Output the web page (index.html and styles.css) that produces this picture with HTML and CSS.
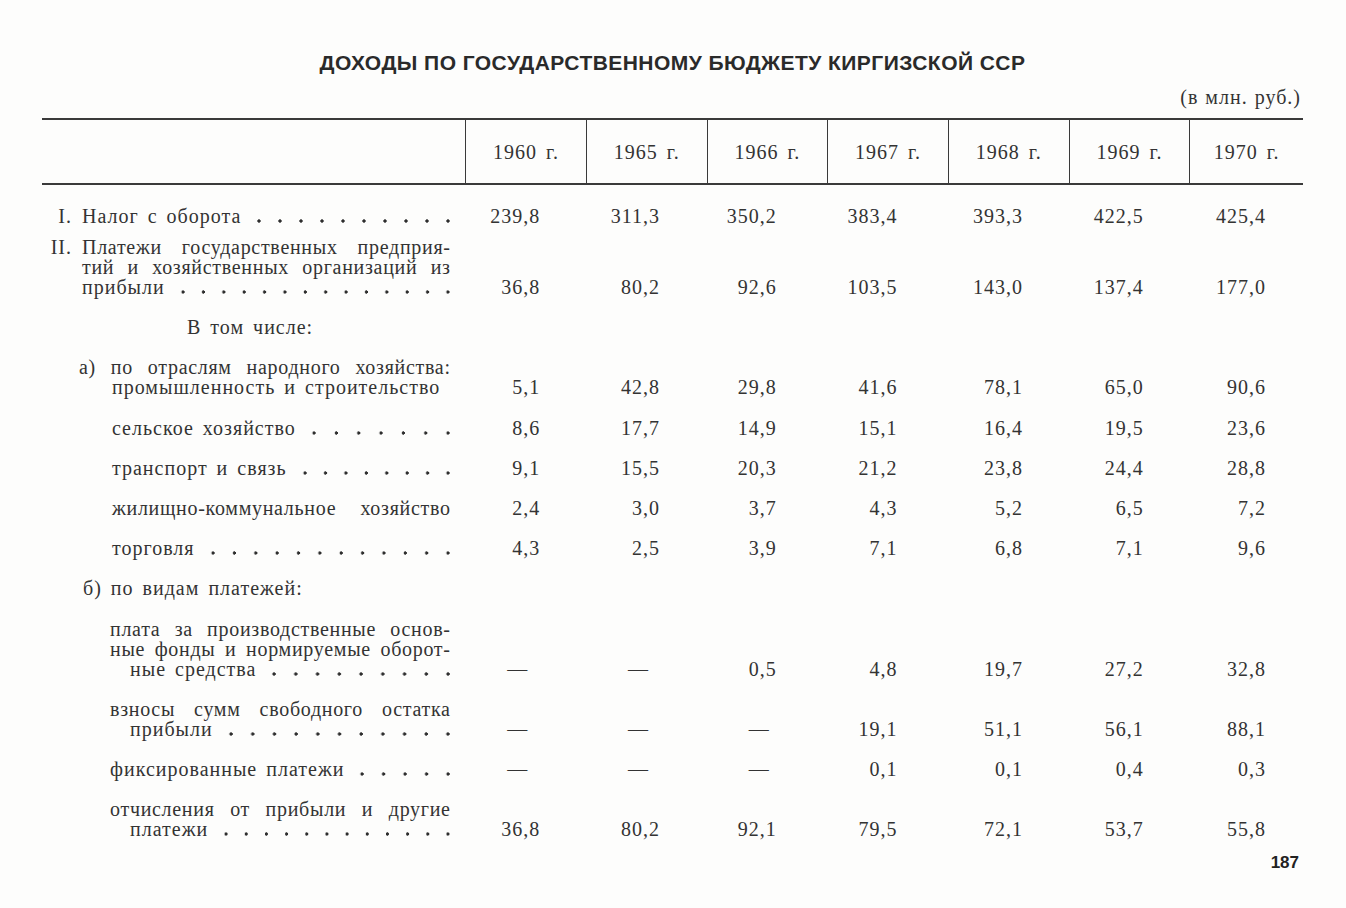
FILE: index.html
```html
<!DOCTYPE html>
<html lang="ru">
<head>
<meta charset="utf-8">
<title>Доходы по государственному бюджету Киргизской ССР</title>
<link rel="stylesheet" href="styles.css">
</head>
<body>
<div class="page">
  <h1 class="title">ДОХОДЫ ПО ГОСУДАРСТВЕННОМУ БЮДЖЕТУ КИРГИЗСКОЙ ССР</h1>
  <div class="units">(в млн. руб.)</div>
  <table class="budget">
    <colgroup>
      <col class="c-stub"><col class="c-y"><col class="c-y"><col class="c-y"><col class="c-y"><col class="c-y"><col class="c-y"><col class="c-last">
    </colgroup>
    <thead>
      <tr>
        <th class="stub"></th>
        <th>1960 г.</th><th>1965 г.</th><th>1966 г.</th><th>1967 г.</th><th>1968 г.</th><th>1969 г.</th><th>1970 г.</th>
      </tr>
    </thead>
    <tbody>
      <tr class="first">
        <td class="label"><div class="numbered"><span class="roman">I.</span><div class="body"><div class="line"><span>Налог с оборота</span><span class="lead"></span></div></div></div></td>
        <td class="num">239,8</td><td class="num">311,3</td><td class="num">350,2</td><td class="num">383,4</td><td class="num">393,3</td><td class="num">422,5</td><td class="num">425,4</td>
      </tr>
      <tr class="second">
        <td class="label"><div class="numbered"><span class="roman">II.</span><div class="body">
          <div class="line j">Платежи государственных предприя-</div>
          <div class="line j">тий и хозяйственных организаций из</div>
          <div class="line"><span>прибыли</span><span class="lead"></span></div>
        </div></div></td>
        <td class="num">36,8</td><td class="num">80,2</td><td class="num">92,6</td><td class="num">103,5</td><td class="num">143,0</td><td class="num">137,4</td><td class="num">177,0</td>
      </tr>
      <tr>
        <td class="label incl" colspan="8"><div class="line">В том числе:</div></td>
      </tr>
      <tr>
        <td class="label sub-a">
          <div class="line j">а) по отраслям народного хозяйства:</div>
          <div class="line ind-a">промышленность и строительство</div>
        </td>
        <td class="num">5,1</td><td class="num">42,8</td><td class="num">29,8</td><td class="num">41,6</td><td class="num">78,1</td><td class="num">65,0</td><td class="num">90,6</td>
      </tr>
      <tr>
        <td class="label item-a"><div class="line"><span>сельское хозяйство</span><span class="lead"></span></div></td>
        <td class="num">8,6</td><td class="num">17,7</td><td class="num">14,9</td><td class="num">15,1</td><td class="num">16,4</td><td class="num">19,5</td><td class="num">23,6</td>
      </tr>
      <tr>
        <td class="label item-a"><div class="line"><span>транспорт и связь</span><span class="lead"></span></div></td>
        <td class="num">9,1</td><td class="num">15,5</td><td class="num">20,3</td><td class="num">21,2</td><td class="num">23,8</td><td class="num">24,4</td><td class="num">28,8</td>
      </tr>
      <tr>
        <td class="label item-a"><div class="line j">жилищно-коммунальное хозяйство</div></td>
        <td class="num">2,4</td><td class="num">3,0</td><td class="num">3,7</td><td class="num">4,3</td><td class="num">5,2</td><td class="num">6,5</td><td class="num">7,2</td>
      </tr>
      <tr>
        <td class="label item-a"><div class="line"><span>торговля</span><span class="lead"></span></div></td>
        <td class="num">4,3</td><td class="num">2,5</td><td class="num">3,9</td><td class="num">7,1</td><td class="num">6,8</td><td class="num">7,1</td><td class="num">9,6</td>
      </tr>
      <tr>
        <td class="label sub-b" colspan="8"><div class="line">б) по видам платежей:</div></td>
      </tr>
      <tr>
        <td class="label item-b">
          <div class="line j">плата за производственные основ-</div>
          <div class="line j">ные фонды и нормируемые оборот-</div>
          <div class="line hang"><span>ные средства</span><span class="lead"></span></div>
        </td>
        <td class="num dash">—</td><td class="num dash">—</td><td class="num">0,5</td><td class="num">4,8</td><td class="num">19,7</td><td class="num">27,2</td><td class="num">32,8</td>
      </tr>
      <tr>
        <td class="label item-b">
          <div class="line j">взносы сумм свободного остатка</div>
          <div class="line hang"><span>прибыли</span><span class="lead"></span></div>
        </td>
        <td class="num dash">—</td><td class="num dash">—</td><td class="num dash">—</td><td class="num">19,1</td><td class="num">51,1</td><td class="num">56,1</td><td class="num">88,1</td>
      </tr>
      <tr>
        <td class="label item-b"><div class="line"><span>фиксированные платежи</span><span class="lead"></span></div></td>
        <td class="num dash">—</td><td class="num dash">—</td><td class="num dash">—</td><td class="num">0,1</td><td class="num">0,1</td><td class="num">0,4</td><td class="num">0,3</td>
      </tr>
      <tr>
        <td class="label item-b">
          <div class="line j">отчисления от прибыли и другие</div>
          <div class="line hang"><span>платежи</span><span class="lead"></span></div>
        </td>
        <td class="num">36,8</td><td class="num">80,2</td><td class="num">92,1</td><td class="num">79,5</td><td class="num">72,1</td><td class="num">53,7</td><td class="num">55,8</td>
      </tr>
    </tbody>
  </table>
  <div class="folio">187</div>
</div>
</body>
</html>
```

FILE: styles.css
```css
html, body {
  margin: 0;
  padding: 0;
  background: #fdfdfc;
}

.page {
  width: 1346px;
  height: 908px;
  box-sizing: border-box;
  padding: 50px 43px 0 42px;
  font-family: "Liberation Serif", "DejaVu Serif", serif;
  font-size: 20px;
  letter-spacing: 1px;
  word-spacing: 3px;
  color: #333;
}

.title {
  margin: 0;
  text-align: center;
  font-family: "Liberation Sans", "DejaVu Sans", sans-serif;
  font-weight: bold;
  font-size: 21px;
  line-height: 26px;
  letter-spacing: 0.45px;
  word-spacing: 0;
  color: #2a2a2a;
}

.units {
  margin-top: 11px;
  text-align: right;
  line-height: 20px;
  padding-right: 2px;
  word-spacing: 1px;
}

.budget {
  margin-top: 11px;
  width: 1261px;
  table-layout: fixed;
  border-collapse: collapse;
  border-top: 2px solid #3a3a3a;
}

.c-stub { width: 423px; }
.c-y { width: 120.5px; }
.c-last { width: 113px; }

.budget thead tr {
  border-bottom: 2px solid #3a3a3a;
}

.budget th {
  height: 63px;
  padding: 0;
  font-weight: normal;
  text-align: center;
  vertical-align: middle;
  line-height: 20px;
  border-left: 1.5px solid #3a3a3a;
}

.budget th.stub {
  border-left: none;
}

.budget td {
  padding: 20.2px 0 0 0;
  line-height: 20px;
  vertical-align: bottom;
}

.budget tr.first td {
  padding-top: 21px;
}

.budget tr.second td {
  padding-top: 11px;
}

.label {
  padding-right: 15px !important;
}

.line {
  display: flex;
  white-space: nowrap;
  height: 20px;
}

.line.j {
  display: block;
  text-align: justify;
  text-align-last: justify;
  letter-spacing: 0.7px;
  word-spacing: 0;
}

.lead {
  flex: 1;
  margin-left: 8px;
  margin-right: -7px;
  background-image: radial-gradient(circle, #2e2e2e 0 1.4px, transparent 1.9px);
  background-size: 20px 6px;
  background-repeat: space no-repeat;
  background-position: right 0 bottom 2px;
}

.numbered {
  display: flex;
}

.roman {
  width: 40px;
  box-sizing: border-box;
  padding-right: 10px;
  text-align: right;
  flex: none;
}

.numbered .body {
  flex: 1;
  min-width: 0;
}

.incl {
  padding-left: 145px !important;
}

.sub-a {
  padding-left: 37px !important;
}

.ind-a {
  padding-left: 33px;
}

.item-a {
  padding-left: 70px !important;
}

.sub-b {
  padding-left: 41px !important;
}

.item-b {
  padding-left: 68px !important;
}

.hang {
  padding-left: 20px;
}

.num {
  text-align: right;
  padding-right: 46px !important;
}

.num:nth-child(3) { padding-right: 47px !important; }
.num:nth-child(4),
.num:nth-child(5) { padding-right: 51px !important; }
.num:nth-child(8) { padding-right: 37px !important; }

.num.dash {
  padding-right: 58px !important;
}

.num.dash:nth-child(4) {
  padding-right: 58px !important;
}

.folio {
  margin-top: 14px;
  text-align: right;
  padding-right: 4px;
  font-family: "Liberation Sans", "DejaVu Sans", sans-serif;
  font-weight: bold;
  font-size: 17px;
  line-height: 20px;
  letter-spacing: 0;
  word-spacing: 0;
  color: #222;
}
```
